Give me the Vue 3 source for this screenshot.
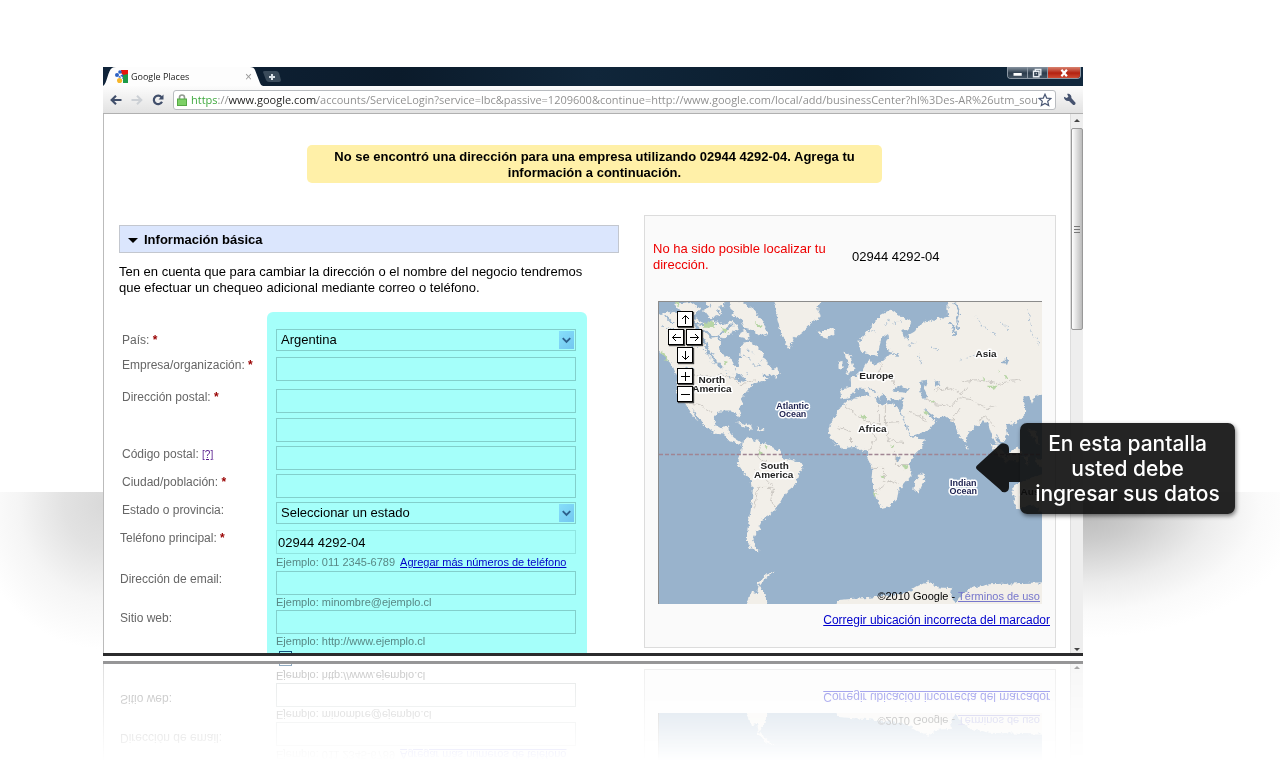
<script setup>
import { ref } from 'vue'

const url = ref('https://www.google.com/accounts/ServiceLogin?service=lbc&passive=1209600&continue=http://www.google.com/local/add/businessCenter?hl%3Des-AR%26utm_source')
const country = ref('Argentina')
const state = ref('Seleccionar un estado')
const phone = ref('02944 4292-04')
</script>

<template>
  <main class="stage">
    <div class="browser-wrap">
      <section class="browser">
        <header class="titlebar">
          <div class="tab">
            <svg class="tab-shape" viewBox="0 0 160 19" preserveAspectRatio="none" aria-hidden="true">
              <path d="M0 19 C4 17 5 3 9 1 Q10 0 13 0 H147 Q151 0 152 3 L157 16 Q158 19 160 19 Z" fill="#fdfdfd" />
            </svg>
            <svg class="favicon" viewBox="0 0 13 13" aria-hidden="true">
              <path d="M6 0h7v6H9L6 3z" fill="#e5150d" />
              <path d="M8 5l5-1v9H8z" fill="#1c9a48" />
              <circle cx="2" cy="5" r="2" fill="#2d62c4" />
              <circle cx="5" cy="2" r="1.800" fill="#2d62c4" />
              <path d="M3 7l5-3v5z" fill="#2d62c4" />
              <circle cx="4.600" cy="10.600" r="2.600" fill="#f6b52a" />
              <path d="M5 5l3 3-2 1z" fill="#fff" />
            </svg>
            <span class="tab-title">Google Places</span>
            <button class="tab-close" aria-label="Cerrar pestaña">×</button>
          </div>
          <button class="new-tab" aria-label="Nueva pestaña">
            <svg viewBox="0 0 18 11"><path d="M0 1Q0 0 2 0H13Q15 0 16 2L18 9Q18 11 16 11H6Q4 11 3 9Z" fill="#3a4b5b" /><path d="M9 3v6M6 6h6" stroke="#dbe2e8" stroke-width="2" /></svg>
          </button>
          <div class="win-buttons">
            <button aria-label="Minimizar"><svg viewBox="0 0 20 12"><path d="M6 7h9" stroke="#fff" stroke-width="3" /></svg></button>
            <button aria-label="Restaurar"><svg viewBox="0 0 20 12"><path d="M8 3V1.500h6v6h-2M6 3.500h6v6H6zM8.500 6h1" fill="none" stroke="#e8edf2" stroke-width="1.500" /></svg></button>
            <button class="close" aria-label="Cerrar"><svg viewBox="0 0 20 12"><path d="M7 2l6 7M13 2L7 9" stroke="#fff" stroke-width="2.400" /></svg></button>
          </div>
        </header>

        <nav class="toolbar">
          <button aria-label="Atrás"><svg viewBox="0 0 12 10"><path d="M11.500 5H2M6 .8L1.700 5 6 9.200" fill="none" stroke="#414f6b" stroke-width="2.200" /></svg></button>
          <button aria-label="Adelante"><svg viewBox="0 0 12 10"><path d="M.5 5H10M6 .8L10.300 5 6 9.200" fill="none" stroke="#ccd0d5" stroke-width="2" /></svg></button>
          <button aria-label="Recargar"><svg viewBox="0 0 12 12"><path d="M9.500 3.200A4.300 4.300 0 1 0 10 7.800" fill="none" stroke="#414f6b" stroke-width="2.200" /><path d="M6.500 5.500h5V.5z" fill="#414f6b" /></svg></button>
          <div class="address">
            <svg class="lock" viewBox="0 0 10 12" aria-hidden="true"><path d="M2.500 6V3.500a2.500 2.500 0 0 1 5 0V6" fill="none" stroke="#929b91" stroke-width="1.600" /><rect x=".5" y="5" width="9" height="6.500" fill="#7dd067" stroke="#55a846" /></svg>
            <input v-model="url" class="url" aria-label="Dirección web" spellcheck="false" />
            <button class="star" aria-label="Marcar página"><svg viewBox="0 0 14 14"><path d="M7 1.200l1.700 3.900 4.200.4-3.200 2.800 1 4.300L7 10.400l-3.700 2.200 1-4.300L1.100 5.500l4.200-.4z" fill="#fff" stroke="#4a5875" stroke-width="1.200" /></svg></button>
          </div>
          <button class="wrench" aria-label="Herramientas"><svg viewBox="0 0 14 14"><path d="M1 4L4 5.500 5.800 4 4.500 1C7 .5 9.500 2.500 9 5.500L13.500 10.500Q13.800 13 11 13L6.500 8.500C3.500 9 .8 7 1 4z" fill="#46536f" /></svg></button>
        </nav>

        <div class="viewport">
          <div class="page">
            <p class="notice">No se encontró una dirección para una empresa utilizando 02944 4292-04. Agrega tu información a continuación.</p>

            <div class="columns">
              <section class="basic">
                <h1><span class="caret"></span>Información básica</h1>
                <p class="note">Ten en cuenta que para cambiar la dirección o el nombre del negocio tendremos que efectuar un chequeo adicional mediante correo o teléfono.</p>

                <form @submit.prevent>
                  <div class="row country">
                    <label for="pais">País: <b>*</b></label>
                    <div class="field select">
                      <select id="pais" v-model="country"><option>Argentina</option></select>
                      <svg viewBox="0 0 16 18" aria-hidden="true"><path d="M4 7l4 4 4-4" /></svg>
                    </div>
                  </div>
                  <div class="row company">
                    <label for="empresa">Empresa/organización: <b>*</b></label>
                    <div class="field"><input id="empresa" type="text" /></div>
                  </div>
                  <div class="row postal">
                    <label for="direccion">Dirección postal: <b>*</b></label>
                    <div class="field">
                      <input id="direccion" type="text" />
                      <input type="text" class="line-two" aria-label="Dirección postal, segunda línea" />
                    </div>
                  </div>
                  <div class="row">
                    <div class="caption"><label for="codigo">Código postal:</label> <a class="help" href="#">[?]</a></div>
                    <div class="field"><input id="codigo" type="text" /></div>
                  </div>
                  <div class="row">
                    <label for="ciudad">Ciudad/población: <b>*</b></label>
                    <div class="field"><input id="ciudad" type="text" /></div>
                  </div>
                  <div class="row state">
                    <label for="estado">Estado o provincia:</label>
                    <div class="field select">
                      <select id="estado" v-model="state"><option>Seleccionar un estado</option></select>
                      <svg viewBox="0 0 16 18" aria-hidden="true"><path d="M4 7l4 4 4-4" /></svg>
                    </div>
                  </div>
                  <div class="row contact">
                    <label for="telefono">Teléfono principal: <b>*</b></label>
                    <div class="field">
                      <input id="telefono" v-model="phone" class="light" type="text" />
                      <p class="hint tall">Ejemplo: 011 2345-6789 <a href="#">Agregar más números de teléfono</a></p>
                    </div>
                  </div>
                  <div class="row contact">
                    <label for="email">Dirección de email:</label>
                    <div class="field">
                      <input id="email" type="text" />
                      <p class="hint">Ejemplo: minombre@ejemplo.cl</p>
                    </div>
                  </div>
                  <div class="row contact">
                    <label for="web">Sitio web:</label>
                    <div class="field">
                      <input id="web" type="text" />
                      <p class="hint">Ejemplo: http://www.ejemplo.cl</p>
                      <input type="checkbox" class="no-site" aria-label="Sin sitio web" />
                    </div>
                  </div>
                </form>
              </section>

              <aside class="panel">
                <div class="located">
                  <p class="error">No ha sido posible localizar tu dirección.</p>
                  <p>02944 4292-04</p>
                </div>
                <div class="map">
                  <svg class="world" viewBox="658 301 384 303" preserveAspectRatio="xMidYMid slice" role="img" aria-label="Mapa del mundo">
                    <defs>
                      <filter id="rough" x="0" y="0" width="100%" height="100%">
                        <feTurbulence type="fractalNoise" baseFrequency=".22" numOctaves="3" seed="4" result="n" />
                        <feDisplacementMap in="SourceGraphic" in2="n" scale="6" xChannelSelector="R" yChannelSelector="G" />
                      </filter>
                    </defs>
                    <rect x="650" y="295" width="400" height="320" fill="#99b3cc" />
                    <g filter="url(#rough)">
                      <rect x="640" y="290" width="420" height="330" fill="none" />
                      <g fill="#f2efe9">
                        <path d="M650 318L662 313 674 310 684 316 694 318 704 323 714 320 722 324 730 320 736 325 738 329 728 333 719 342 720 352 732 360 735 368 739 360 740 348 742 342 748 341 755 345 762 352 766 362 774 371 770 374 760 374 768 378 756 382 748 388 740 398 744 402 738 408 740 416 737 418 735 412 730 411 718 411 713 417 715 426 720 427 727 425 728 431 733 437 741 442 740 445 728 440 723 433 712 432 703 425 692 408 696 420 690 413 684 402 678 395 675 390 677 378 672 366 664 356 656 348Z" />
                        <path d="M673 303L690 301 700 308 694 314 682 312ZM703 309L718 304 722 314 710 318ZM705 300h20l-3 5-12 2zM728 298L742 301 752 308 762 320 767 333 760 335 752 329 744 327 740 318 732 314ZM742 329l8 4-4 6-8-2zM771 371l5-6 3 8-4 3z" />
                        <path d="M772 296L776 315 779 328 783 340 789 349 793 338 801 332 811 322 820 316 817 306 824 296Z" />
                        <path d="M817 331L823 330 833 328 834 333 827 337 820 335ZM844 352L849 354 852 362 855 369 845 373 848 366ZM838 362L843 361 843 368 838 369Z" />
                        <path d="M839 388L851 386 850 377 860 373 866 362 870 358 872 364 882 361 888 355 894 351 888 350 884 345 888 335 881 337 879 347 876 357 871 354 861 352 858 341 869 329 880 314 890 309 900 315 912 322 908 329 902 330 903 337 914 331 920 323 930 320 938 318 948 316 947 305 953 295H1055V389L1035 395 1032 403 1029 396 1022 397 1026 405 1026 413 1017 422 1006 424 1008 433 1003 443 996 435 998 446 992 436 988 423 983 421 975 426 968 432 966 442 960 438 957 428 953 421 945 416 935 417 924 408 929 416 936 420 928 430 912 436 908 428 902 415 901 407 903 399 893 398 887 400 882 391 880 399 874 389 866 385 879 395 874 399 863 388 856 388 850 396 841 398Z" />
                        <path d="M847 400L865 395 873 394 875 401 882 405 887 402 898 406 905 425 911 437 925 438 922 446 912 456 909 464 911 475 904 483 898 490 897 498 888 506 880 508 875 493 871 479 872 468 867 458 868 451 861 450 856 446 842 448 836 444 829 436 828 428 834 417 840 407Z" />
                        <path d="M922 472L924 480 918 493 914 490 915 480ZM965 444l3 4-2 2zM735 422l10 1 9 5-6 0zM756 427l9 2-6 2z" />
                        <path d="M742 441L747 437 755 441 765 442 772 448 778 450 783 458 800 461 803 466 798 473 795 484 785 492 780 501 774 509 769 515 762 519 758 529 754 534 752 543 759 550 751 549 746 540 747 526 750 510 752 490 751 480 743 472 736 462 740 453Z" />
                        <path d="M990 442l8 4 12 14-3 2-12-11zM1008 452l10-6 4 6-5 10-9-2zM1028 430l8 0 4 14-6-4zM1022 455h8l-3 10zM1034 458l14 3v9l-10-5zM1012 487L1024 480 1034 476 1050 472V520L1034 505 1016 509Z" />
                        <path d="M774 571L764 579 758 587 765 593 766 615H742L748 600 750 592 756 594 759 580 766 574ZM830 615L838 600 850 599 867 598 890 595 907 592 917 586 928 581 938 587 952 588 950 597 955 602 962 594 970 588 990 584 1017 583 1050 582V615Z" />
                      </g>
                      <g fill="#99b3cc">
                        <path d="M892 389l6-4 5 2 6 2-2 3-14-1zM920 381l7-1-3 8 4 9-6 1-2-8zM934 381l4-1 1 4-4 1zM1001 362l8-7-3 8zM893 353l5-1-3 3zM905 336l4-2-1 5zM733 373l7 2 6 5-5 1-7-4zM896 456l3 0 0 4-4-1zM700 334l3 4M706 350l4 5 4-2z" />
                        <path d="M888 333L884 344 889 351 882 360 876 360 878 350 881 338Z" />
                      </g>
                      <g fill="none" stroke="#99b3cc">
                        <path d="M955 302l4 9-3 8 2 10M949 321l5 6 1 8M703 329l7 7 7-1 5 6M694 323l14 2 9-3M700 333l8 18 13 17M750 304l10 8M664 314l8 8M716 309l12 14M690 318l7 10M668 330l10 2M720 333l12-10" stroke-width="2" />
                        <path d="M690 345l13 4 9 13 9 5M705 344l3 12M742 354l8 5M746 348l9 6M752 364l8 2M660 325l14 4 8-3 6 8M725 370l8 8 15-5M756 365l6-6M684 365l8 3" stroke-dasharray="3 3" />
                        <path d="M868 325l6 6M889 318l-4 7M893 322l8-2M908 345l8-4M918 355l4 9M930 345l8 5M976 315l6 11 14 8M1028 308l3 22 9 15M960 360l16-6M1000 320l10 10" stroke-dasharray="3 2" stroke-width=".8" />
                      </g>
                      <g fill="none" stroke="#c3bfba" stroke-width=".8">
                        <path d="M681 375h48l11 9 14-5M684 402l15 2 13 9M845 405l11 9 15 9 8 1V404M885 403v19l15-1M871 424l4 14-7 12M885 422l3 18 15 2M872 467h12v15l10-2M874 491l9-5M850 446v-15l-12-4M895 450v15l14 0M888 480l10 4M908 411l12 5 7 5M925 397l10 7 16 2 8-9 11 2 18 9 7-3M933 390l18-3 9 5 8-5M960 407l-8 13M977 421l8-5 10 10M962 381l16-2 18 4 25-4M863 377l14-2 4-12M877 376l12 0 6 8M760 443l-3 14 11 7M752 469l8 5 13 13-3 13M754 507l3-20 13 0M775 507l-5-8" />
                      </g>
                      <g fill="#b7d5a5">
                        <path d="M674 302h6l-2 4zM703 322l10-1 1 6-11 0zM719 327l9 2-3 4zM753 321l8 3-3 3zM660 350l4 3 3 7-4-2zM722 360l4 1-2 3zM757 450l5 2-3 3zM764 445l3 1-2 3zM860 414l6 2-3 3zM873 489l4 5-2 3zM903 465l5 2-3 3zM880 475l4 2-2 2zM983 376l2 3-3 0zM988 385l9 0-2 3-6-1zM997 369l2 1-1 2zM1005 374l3 2-3 1zM931 400l3 2-3 1zM924 411l4 1-2 3zM890 444l3 1-2 3z" />
                      </g>
                    </g>
                    <path d="M658 454h384" stroke="#a08593" stroke-width="1.500" stroke-dasharray="4 2" />
                    <g class="place" text-anchor="middle">
                      <text x="711" y="382">North</text><text x="711" y="391">America</text>
                      <text x="774" y="469">South</text><text x="773" y="478">America</text>
                      <text x="876" y="378">Europe</text><text x="986" y="356">Asia</text><text x="872" y="431">Africa</text>
                      <text x="1030" y="495">Aus</text>
                    </g>
                    <g class="place sea" text-anchor="middle">
                      <text x="792" y="408">Atlantic</text><text x="792" y="416">Ocean</text>
                      <text x="963" y="486">Indian</text><text x="963" y="494">Ocean</text>
                    </g>
                  </svg>
                  <div class="map-controls">
                    <button class="wide" aria-label="Arriba"><svg viewBox="0 0 13 13"><path d="M6.500 11V2.500M3 6l3.500-3.500L10 6" /></svg></button>
                    <button aria-label="Izquierda"><svg viewBox="0 0 13 13"><path d="M11 6.500H2.500M6 3L2.500 6.500 6 10" /></svg></button>
                    <button aria-label="Derecha"><svg viewBox="0 0 13 13"><path d="M2 6.500h8.500M7 3l3.500 3.500L7 10" /></svg></button>
                    <button class="wide" aria-label="Abajo"><svg viewBox="0 0 13 13"><path d="M6.500 2v8.500M3 7l3.500 3.500L10 7" /></svg></button>
                    <button class="wide zoom-in" aria-label="Acercar"><svg viewBox="0 0 13 13"><path d="M6.500 2v9M2 6.500h9" /></svg></button>
                    <button class="wide" aria-label="Alejar"><svg viewBox="0 0 13 13"><path d="M2 6.500h9" /></svg></button>
                  </div>
                  <p class="credits">©2010 Google - <a href="#">Términos de uso</a></p>
                </div>
                <a class="fix" href="#">Corregir ubicación incorrecta del marcador</a>
              </aside>
            </div>
          </div>
          <div class="scrollbar" aria-hidden="true">
            <i class="up"></i>
            <div class="thumb"><span></span></div>
            <i class="down"></i>
          </div>
        </div>
      </section>
      <div class="highlight"></div>
    </div>

    <aside class="callout">
      <svg viewBox="0 0 44 50" aria-hidden="true"><path d="M1 22.500L24 1.500Q26-.5 30 1 33 2 33 6V10H44V39H33V44Q33 48 30 49 26 50 24 46.500L1 26.500Q-1 24.500 1 22.500Z" /></svg>
      <p>En esta pantalla usted debe ingresar sus datos</p>
    </aside>
  </main>
</template>

<style>
body { background: #fff; }
</style>

<style scoped>
* { box-sizing: border-box; }
.stage {
  position: relative;
  min-height: 100vh;
  padding: 67px 197px 0 103px;
  overflow: hidden;
  font-family: "Liberation Sans", Arial, sans-serif;
  font-size: 13px;
  line-height: 16px;
  color: #000;
  background:
    radial-gradient(ellipse 130px 145px at 100% 12px, #d9d9d9 0, #e2e2e2 30%, #f5f5f5 65%, #fff 100%) 0 492px / 103px 170px no-repeat,
    radial-gradient(ellipse 220px 130px at 0 16px, #b8b8b8 0, #cbcbcb 25%, #ececec 58%, #fafafa 80%, #fff 100%) 100% 492px / 197px 180px no-repeat,
    #fff;
}
p, h1 { margin: 0; }
button { padding: 0; border: 0; background: none; font: inherit; cursor: pointer; }
button svg { display: block; }
.browser-wrap { position: relative; }
.browser {
  border-bottom: 3px solid #2b2b2d;
  background: #fff;
  -webkit-box-reflect: below 5px linear-gradient(transparent 83%, rgba(0, 0, 0, .5));
}

.titlebar { display: flex; height: 19px; background: linear-gradient(90deg, #10243a, #0b1b2b 30%, #10263a 50%, #0a1c2d 75%, #11283d); }
.tab { position: relative; display: flex; align-items: center; width: 160px; padding: 0 11px 0 12px; }
.tab-shape { position: absolute; inset: 0; width: 100%; height: 100%; }
.favicon { position: relative; width: 13px; height: 13px; }
.tab-title { position: relative; margin-left: 3px; font: 9px/16px "Open Sans", "Noto Sans", sans-serif; color: #222; }
.tab-close { position: relative; margin-left: auto; font-size: 12px; color: #999; }
.new-tab { width: 18px; height: 11px; margin: 4px 0 0; }
.win-buttons { display: flex; height: 12px; margin-left: auto; margin-right: 2px; border: 1px solid #8d99a5; border-top: 0; border-radius: 0 0 4px 4px; overflow: hidden; }
.win-buttons button { width: 20px; height: 12px; background: linear-gradient(#8793a0, #2c3c4c 50%, #4a5a69); border-right: 1px solid #8d99a5; }
.win-buttons svg { height: 11px; margin: 0 auto; }
.win-buttons .close { width: 32px; border: 0; background: linear-gradient(#d9836f, #b32211 50%, #d5543a); }

.toolbar { display: flex; align-items: center; height: 28px; padding: 0 7px; border-bottom: 1px solid #b0b0b0; background: linear-gradient(#fcfcfc, #e2e2e2); }
.toolbar > button { width: 12px; margin-right: 9px; }
.address { display: flex; flex: 1; align-items: center; min-width: 0; height: 20px; padding: 0 3px; border: 1px solid #b9bcc0; border-radius: 3px; background: #fff; }
.lock { flex: none; width: 10px; height: 12px; }
.url {
  flex: 1; min-width: 0; height: 18px; margin-left: 4px; padding: 0; border: 0; outline: 0;
  font: 11px/18px "Open Sans", "Noto Sans", sans-serif;
  color: transparent;
  background: linear-gradient(90deg, #35a535 0 26px, #8b8b8b 26px 37px, #1e1e1e 37px 126px, #8b8b8b 126px);
  -webkit-background-clip: text;
  background-clip: text;
}
.star { width: 14px; height: 14px; }
.toolbar > .wrench { width: 13px; margin: 0 0 0 7px; }

.viewport { display: flex; height: calc(100vh - 233px); min-height: 539px; overflow: hidden; border-left: 1px solid #bbb; }
.page { flex: 1; min-width: 0; padding: 31px 14px 0 15px; }
.notice { margin: 0 174px 32px 188px; padding: 4px 16px 2px; border-radius: 5px; background: #fff0a8; font-weight: bold; text-align: center; }
.columns { display: grid; grid-template-columns: 500fr 412fr; gap: 25px; align-items: start; }
.basic { padding-top: 10px; }
h1 { display: flex; align-items: center; height: 28px; padding: 2px 0 0 8px; border: 1px solid #c3c7cf; background: #dbe6fd; font-size: 13px; }
.caret { width: 0; margin-right: 6px; border: 5px solid transparent; border-top-color: #000; border-bottom: 0; }
.note { max-width: 480px; margin: 11px 0 33px; }

.row { display: flex; margin-bottom: 4px; padding-left: 3px; }
.row > label, .caption { flex: 0 0 154px; font-size: 12px; color: #666; white-space: nowrap; }
.row b { color: #900; font-size: 12px; }
.help { font-size: 10px; color: #551a8b; }
.row.country { margin-bottom: 6px; }
.country > label { padding-top: 3px; }
.row.company { margin-bottom: 8px; }
.row.state { margin-bottom: 6px; }
.row.contact { margin: 0; padding-left: 1px; }
.contact > label { flex-basis: 156px; }
.field { position: relative; width: 300px; }
.field input[type="text"] { display: block; width: 100%; height: 24px; padding: 0 1px; border: 1px solid #c9cfcf; background: transparent; font: inherit; outline: 0; }
.field input.light { border-color: #dde5e5; }
.field input.line-two { margin-top: 5px; }
.field select { display: block; width: 100%; height: 22px; padding: 0 20px 0 4px; border: 1px solid #c9cfcf; border-radius: 0; background: transparent; appearance: none; font: inherit; font-size: 13px; color: #000; }
.select svg { position: absolute; top: 2px; right: 2px; width: 15px; height: 18px; background: linear-gradient(135deg, #cfdfff, #b1c6f5); pointer-events: none; }
.select path { fill: none; stroke: #45608f; stroke-width: 2; }
.hint { height: 15px; line-height: 15px; font-size: 11px; color: #888; white-space: nowrap; }
.hint.tall { height: 17px; line-height: 16px; }
.hint a { margin-left: 2px; }
a { color: #0000cc; }
.no-site { display: block; width: 13px; height: 13px; margin: 2px 3px; border: 1px solid #1c5180; background: #fff; appearance: none; }

.panel { height: 433px; border: 1px solid #dcdcdc; background: #fafafa; padding: 25px 13px 0; }
.located { display: flex; align-items: center; gap: 18px; margin-left: -5px; }
.error { width: 181px; color: #e00; }
.map { position: relative; margin-top: 28px; height: 303px; border: 1px solid #8b8b8b; border-right: 0; border-bottom: 0; }
.world { display: block; width: 100%; height: 100%; }
.place { font: bold 10px "Liberation Sans", Arial, sans-serif; fill: #222; stroke: #fff; stroke-width: 3px; stroke-linejoin: round; paint-order: stroke; }
.sea { font-size: 9px; fill: #1d2250; }
.map-controls { position: absolute; left: 9px; top: 9px; display: grid; grid-template-columns: 16px 16px; gap: 2px; }
.map-controls button { width: 16px; height: 16px; padding: 1px; border: 1px solid #000; background: #fff; box-shadow: 1px 1px 1px #444; }
.map-controls .wide { grid-column: 1 / 3; justify-self: center; }
.map-controls .zoom-in { margin-top: 3px; }
.map-controls svg { width: 13px; height: 13px; fill: none; stroke: #000; stroke-width: 1; }
.credits { position: absolute; right: 2px; bottom: 0; font-size: 11px; }
.credits a { color: #7777cc; }
.fix { display: block; margin: 8px -8px 0 0; text-align: right; white-space: nowrap; font-size: 12px; }

.scrollbar { display: flex; flex-direction: column; align-items: center; flex: 0 0 13px; border-left: 1px solid #ddd; background: #eee; }
.scrollbar i { border: 3px solid transparent; }
.scrollbar .up { margin: 5px 0 6px; border-bottom-color: #444; border-top: 0; }
.scrollbar .down { margin: auto 0 2px; border-top-color: #444; border-bottom: 0; }
.thumb { display: grid; place-items: center; width: 12px; height: 202px; border: 1px solid #999; border-radius: 2px; background: linear-gradient(90deg, #fff, #ddd 50%, #bbb); }
.thumb span { width: 6px; height: 7px; background: repeating-linear-gradient(#777 0 1px, transparent 1px 3px); }

.highlight { position: absolute; left: 164px; top: 245px; bottom: 3px; width: 320px; border-radius: 6px 6px 0 0; background: #a5fffa; mix-blend-mode: multiply; pointer-events: none; }

.callout { position: absolute; right: 45px; top: 423px; width: 215px; padding: 8px 13px; border-radius: 7px; background: rgba(12, 12, 12, .9); color: #fff; box-shadow: 1px 2px 4px rgba(0, 0, 0, .5); font: 500 21px/25px Inter, "Open Sans", sans-serif; text-align: center; }
.callout svg { position: absolute; right: 100%; top: 20px; width: 44px; height: 50px; fill: rgba(12, 12, 12, .92); }
</style>
